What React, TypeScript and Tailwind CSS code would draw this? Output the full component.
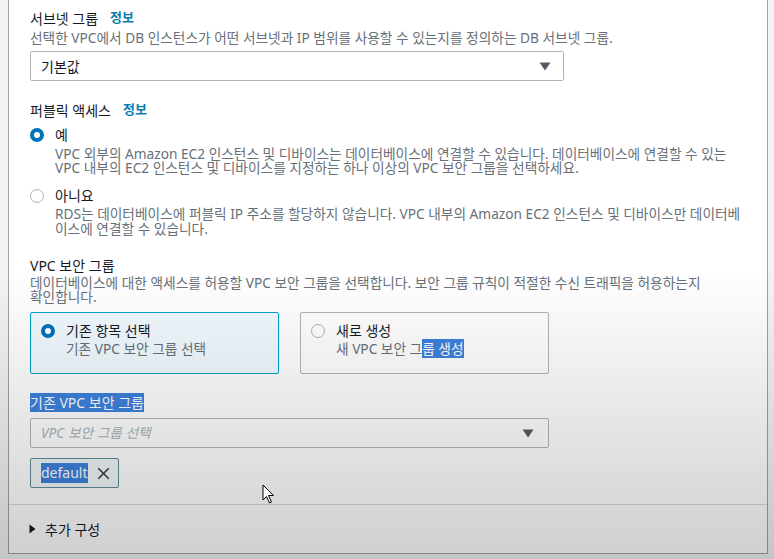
import React from 'react';
import { X } from 'lucide-react';

const Info: React.FC = () => (
  <span className="ml-3 text-[13px] font-bold text-[#0a7cae]">정보</span>
);

const Radio: React.FC<{ checked?: boolean }> = ({ checked }) =>
  checked ? (
    <span className="w-[14px] h-[14px] rounded-full border-[4px] border-[#0073bb] bg-white shrink-0" />
  ) : (
    <span className="w-[14px] h-[14px] rounded-full border border-[#aab7b8] bg-white shrink-0" />
  );

const Caret: React.FC = () => (
  <svg width="12" height="9" viewBox="0 0 12 9" className="shrink-0">
    <path d="M0.5 0.5 H11.5 L6 8.5 Z" fill="#545b64" />
  </svg>
);

const App: React.FC = () => {
  return (
    <div className="relative min-h-screen h-[559px] overflow-hidden bg-[#f2f3f3] font-['Noto_Sans','Noto_Sans_CJK_KR',sans-serif] text-[#16191f]">
      <div className="ml-2 w-[760px] h-[554px] bg-white border-l border-r border-b border-[#9aa4a6] flex flex-col">
        <div className="px-[21px] pt-2 flex-1">
          {/* 서브넷 그룹 */}
          <div className="flex items-center h-5 text-[14px]">
            서브넷 그룹
            <Info />
          </div>
          <p className="mt-[2px] text-[13.7px] leading-4 text-[#687078]">
            선택한 VPC에서 DB 인스턴스가 어떤 서브넷과 IP 범위를 사용할 수 있는지를 정의하는 DB 서브넷 그룹.
          </p>
          <div className="mt-[5px] w-[534px] h-[30px] border border-[#aab7b8] rounded-[2px] flex items-center justify-between pl-[10px] pr-[12px] text-[14px]">
            <span>기본값</span>
            <Caret />
          </div>

          {/* 퍼블릭 액세스 */}
          <div className="mt-[19px] flex items-center h-5 text-[14px]">
            퍼블릭 액세스
            <Info />
          </div>
          <div className="mt-[5px] flex gap-[11px]">
            <div className="h-5 flex items-center">
              <Radio checked />
            </div>
            <div>
              <div className="h-5 leading-5 text-[14px]">예</div>
              <p className="mt-[2px] text-[13.7px] leading-[14px] text-[#687078]">
                VPC 외부의 Amazon EC2 인스턴스 및 디바이스는 데이터베이스에 연결할 수 있습니다. 데이터베이스에 연결할 수 있는
                <br />
                VPC 내부의 EC2 인스턴스 및 디바이스를 지정하는 하나 이상의 VPC 보안 그룹을 선택하세요.
              </p>
            </div>
          </div>
          <div className="mt-[11px] flex gap-[11px]">
            <div className="h-5 flex items-center">
              <Radio />
            </div>
            <div>
              <div className="h-5 leading-5 text-[14px]">아니요</div>
              <p className="text-[13.7px] leading-[15px] text-[#687078]">
                RDS는 데이터베이스에 퍼블릭 IP 주소를 할당하지 않습니다. VPC 내부의 Amazon EC2 인스턴스 및 디바이스만 데이터베
                <br />
                이스에 연결할 수 있습니다.
              </p>
            </div>
          </div>

          {/* VPC 보안 그룹 */}
          <div className="mt-[20px] h-5 leading-5 text-[14px]">VPC 보안 그룹</div>
          <p className="text-[13.7px] leading-[14px] text-[#687078]">
            데이터베이스에 대한 액세스를 허용할 VPC 보안 그룹을 선택합니다. 보안 그룹 규칙이 적절한 수신 트래픽을 허용하는지
            <br />
            확인합니다.
          </p>
          <div className="mt-2 w-[519px] grid grid-cols-2 gap-[21px]">
            <div className="h-[62px] border border-[#00a1c9] bg-[#f1faff] rounded-[2px] flex gap-[11px] pl-[10px] pt-[8px]">
              <div className="h-5 flex items-center">
                <Radio checked />
              </div>
              <div>
                <div className="h-5 leading-5 text-[14px]">기존 항목 선택</div>
                <div className="text-[13.7px] leading-4 text-[#687078]">기존 VPC 보안 그룹 선택</div>
              </div>
            </div>
            <div className="h-[62px] border border-[#aab7b8] bg-white rounded-[2px] flex gap-[11px] pl-[10px] pt-[8px]">
              <div className="h-5 flex items-center">
                <Radio />
              </div>
              <div>
                <div className="h-5 leading-5 text-[14px]">새로 생성</div>
                <div className="text-[13.7px] leading-4 text-[#687078]">
                  새 VPC 보안 그<span className="bg-[#3d82dd] text-white">룹 생성</span>
                </div>
              </div>
            </div>
          </div>

          {/* 기존 VPC 보안 그룹 */}
          <div className="mt-[19px] h-5 leading-5 text-[14px]">
            <span className="bg-[#3d82dd] text-white">기존 VPC 보안 그룹</span>
          </div>
          <div className="mt-[5px] w-[519px] h-[30px] border border-[#aab7b8] rounded-[2px] flex items-center justify-between pl-[10px] pr-[14px] text-[13.7px]">
            <span className="italic text-[#aab7b8]">VPC 보안 그룹 선택</span>
            <Caret />
          </div>
          <div className="mt-[10px] inline-flex items-center gap-[6px] h-[30px] w-[89px] border border-[#5f8d96] bg-[#f1f7f9] rounded-[2px] pl-[10px]">
            <span className="bg-[#3d82dd] text-white text-[14px] leading-5">default</span>
            <X size={19} strokeWidth={2.2} className="text-[#3f454c]" />
          </div>
        </div>

        {/* 추가 구성 */}
        <div className="border-t border-[#d5dbdb] h-[49px] flex items-center gap-[9px] pl-[20px] text-[14px]">
          <svg width="7" height="10" viewBox="0 0 7 10">
            <path d="M0.5 0.5 L6.5 5 L0.5 9.5 Z" fill="#16191f" />
          </svg>
          <span>추가 구성</span>
        </div>
      </div>

      {/* video vignette */}
      <div className="pointer-events-none absolute inset-0 bg-[linear-gradient(to_bottom,transparent_48%,rgba(0,0,0,0.19)_100%)]" />

      {/* mouse cursor */}
      <svg className="absolute left-[262px] top-[484px]" width="14" height="20" viewBox="0 0 14 20">
        <path d="M1 1 L1 16 L4.5 12.5 L7.5 19 L9.5 18 L6.5 11.5 L11.5 11.5 Z" fill="white" stroke="black" strokeWidth="1" strokeLinejoin="round" />
      </svg>
    </div>
  );
};

export default App;
